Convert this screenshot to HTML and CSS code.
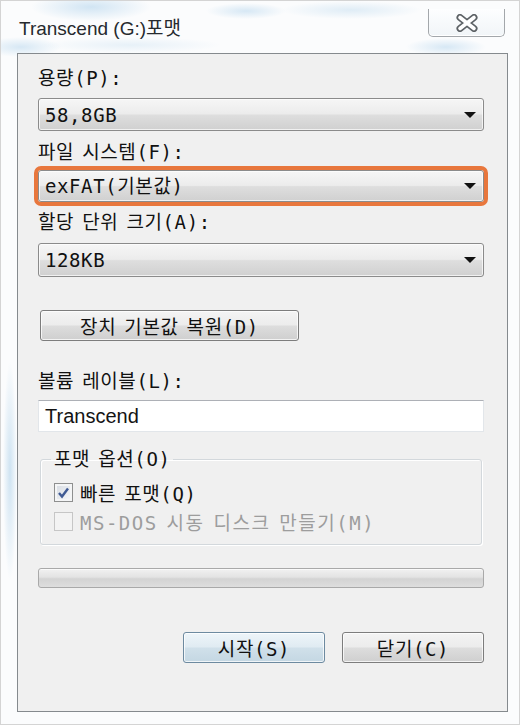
FILE: index.html
```html
<!DOCTYPE html>
<html lang="ko">
<head>
	<meta charset="UTF-8">
	<title>Transcend (G:)포맷</title>
	<link rel="stylesheet" href="styles.css">
</head>
<body>
	<div class="frame">
		<div class="titlebar">
			<span class="title">Transcend (G:)포맷</span>
			<button class="close" type="button">
				<svg width="24" height="18" viewBox="0 0 24 18">
					<path d="M5 3.5 L19 14.5 M19 3.5 L5 14.5" stroke="#5d6266" stroke-width="7" stroke-linecap="round" fill="none"/>
					<path d="M5 3.5 L19 14.5 M19 3.5 L5 14.5" stroke="#fff" stroke-width="3.6" stroke-linecap="round" fill="none"/>
				</svg>
			</button>
		</div>
		<div class="client">
			<div class="label first">용량(P):</div>
			<div class="combo c1"><span>58,8GB</span><i class="arrow"></i></div>

			<div class="label l2">파일 시스템(F):</div>
			<div class="combo c2 marked"><span>exFAT(기본값)</span><i class="arrow"></i></div>

			<div class="label l3">할당 단위 크기(A):</div>
			<div class="combo c3"><span>128KB</span><i class="arrow"></i></div>

			<button class="btn restore" type="button">장치 기본값 복원(D)</button>

			<div class="label l4">볼륨 레이블(L):</div>
			<div class="textbox">Transcend</div>

			<fieldset class="group">
				<legend>포맷 옵션(O)</legend>
				<div class="check-row">
					<span class="check on">
						<svg width="13" height="13" viewBox="0 0 13 13"><path d="M2 7 L5 10.5 L11 2.5" stroke="#3f5a94" stroke-width="2.4" fill="none"/></svg>
					</span>
					<span>빠른 포맷(Q)</span>
				</div>
				<div class="check-row off">
					<span class="check"></span>
					<span class="wide">MS-DOS 시동 디스크 만들기(M)</span>
				</div>
			</fieldset>

			<div class="progress"></div>

			<div class="actions">
				<button class="btn default" type="button">시작(S)</button>
				<button class="btn" type="button">닫기(C)</button>
			</div>
		</div>
	</div>
</body>
</html>
```

FILE: styles.css
```css
* {margin: 0;padding: 0;box-sizing: border-box;}
body {background: #fff;font-family: "DejaVu Sans Mono", "Noto Sans CJK KR", monospace;font-size: 19px;letter-spacing: .6px;word-spacing: -4px;color: #111;}

/* window frame (aero glass) */
.frame {
	width: 520px;height: 725px;border: 1px solid #d4d4d4;padding: 0 11px 12px 16px;
	display: flex;flex-direction: column;
	background:
		radial-gradient(60px 14px at 90px 6px, rgba(130,185,225,.35), transparent),
		radial-gradient(40px 8px at 245px 10px, rgba(130,185,225,.3), transparent),
		radial-gradient(70px 9px at 350px 9px, rgba(140,190,225,.25), transparent),
		radial-gradient(40px 10px at 20px 46px, rgba(130,185,225,.3), transparent),
		radial-gradient(90px 8px at 130px 44px, rgba(140,190,225,.18), transparent),
		radial-gradient(40px 9px at 445px 46px, rgba(130,185,225,.3), transparent),
		radial-gradient(7px 110px at 9px 470px, rgba(140,190,225,.4), transparent),
		#fbfcfd;
}
.titlebar {height: 52px;display: flex;justify-content: space-between;align-items: flex-start;}
.title {margin: 16px 0 0 2px;font: 19px/24px "Liberation Sans", "Noto Sans CJK KR", sans-serif;letter-spacing: 0;word-spacing: 0;color: #262a2e;}
.close {
	margin: 8px 3px 0 0;width: 77px;height: 28px;display: flex;align-items: center;justify-content: center;
	border: 1px solid #a3a7ab;border-top: none;border-radius: 0 0 5px 5px;
	background: linear-gradient(#fdfeff, #f1f5f8);box-shadow: inset 0 -1px 0 #fff;
}

.client {
	flex: 1;border: 1px solid #858a8e;background: #f0f0f0;
	padding: 13px 23px 0 20px;display: flex;flex-direction: column;
}
.label {line-height: 22px;height: 22px;white-space: nowrap;}
.l2 {margin-top: 10px;}
.l3 {margin-top: 9px;}
.l4 {margin-top: 29px;}

.combo {
	display: flex;align-items: center;justify-content: space-between;padding: 0 7px 0 6px;
	border: 1px solid #8b8b8b;border-radius: 3px;
	background: linear-gradient(#f6f6f6 0%, #ececec 48%, #dedede 52%, #d0d0d0 100%);
	box-shadow: inset 0 0 0 1px rgba(255,255,255,.7);line-height: 22px;
}
.c1 {margin-top: 9px;height: 33px;}
.c2 {margin-top: 7px;height: 32px;}
.c3 {margin-top: 10px;height: 34px;}
.marked {outline: 4px solid #e8773d;}
.arrow {width: 0;height: 0;border-left: 6px solid transparent;border-right: 6px solid transparent;border-top: 6px solid #111;}

.btn {
	height: 31px;font: inherit;letter-spacing: inherit;word-spacing: inherit;color: #111;
	border: 1px solid #7d7d7d;border-radius: 3px;
	background: linear-gradient(#f4f4f4 0%, #ececec 48%, #dddddd 52%, #cfcfcf 100%);
	box-shadow: inset 0 0 0 1px rgba(255,255,255,.75);
}
.restore {align-self: flex-start;margin: 33px 0 0 2px;width: 259px;}

.textbox {
	margin-top: 8px;height: 32px;padding: 0 6px;background: #fff;
	border: 1px solid #e2e6ea;border-top-color: #adb0b6;
	font: 20px/30px "Liberation Sans", sans-serif;letter-spacing: 0;color: #141414;
}

.group {
	margin: 16px 2px 0;padding: 11px 10px 12px 10px;
	border: 1px solid #d3d8dc;border-radius: 3px;box-shadow: inset 1px 1px 0 #fff, 1px 1px 0 #fff;
}
.group legend {padding: 0 3px;line-height: 22px;}
.check-row {display: flex;align-items: center;gap: 7px;height: 22px;margin-left: 3px;white-space: nowrap;}
.check-row + .check-row {margin-top: 7px;}
.check {
	width: 19px;height: 19px;border: 1px solid #8e8f8f;display: flex;align-items: center;justify-content: center;
	background: linear-gradient(135deg, #d6dbe2, #f7f8fa);box-shadow: inset 0 0 0 2px #f4f5f6;
}
.off {color: #9d9d9d;}
.off .check {border-color: #c6c6c6;background: #f3f3f3;box-shadow: none;}
.wide {letter-spacing: 1.5px;}

.progress {
	margin-top: 23px;height: 20px;border: 1px solid #a9a9a9;border-radius: 3px;
	background: linear-gradient(#f1f1f1 0%, #e3e3e3 45%, #d3d3d3 55%, #dedede 100%);
	box-shadow: inset 0 1px 0 #fafafa;
}

.actions {margin-top: 44px;display: flex;justify-content: flex-end;gap: 17px;}
.actions .btn {width: 142px;}
.default {
	border-color: #6d8aa0;
	background: linear-gradient(#eef5f9 0%, #e0ebf2 48%, #d0e0ea 52%, #c4d7e3 100%);
}
```
